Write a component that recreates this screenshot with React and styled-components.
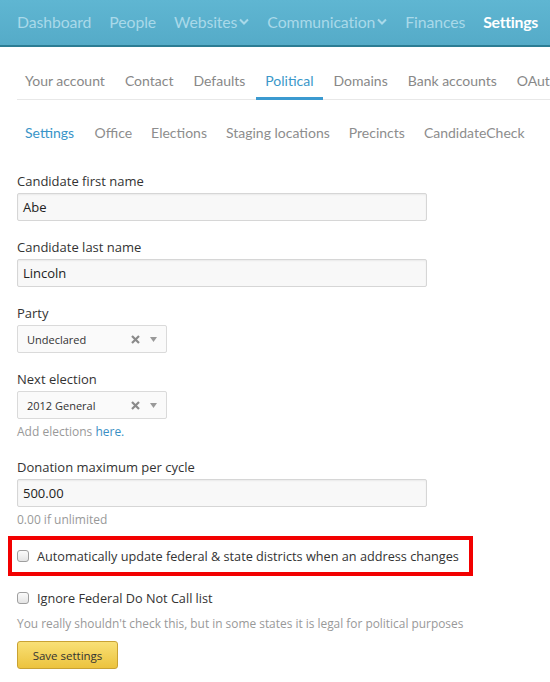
import React from "react";
import styled, { createGlobalStyle } from "styled-components";

const Global = createGlobalStyle`
  html, body {
    margin: 0;
    padding: 0;
    background: #fff;
    overflow: hidden;
  }
  body {
    font-family: "Open Sans", "DejaVu Sans", sans-serif;
    color: #333;
  }
`;

const TopBar = styled.div`
  box-sizing: border-box;
  height: 47px;
  background: linear-gradient(#5fb6d2, #55abc8);
  border-bottom: 2px solid #2c7d94;
  display: flex;
  align-items: center;
  padding: 0 0 3px 17px;
  gap: 18px;
  font-family: Lato, "Open Sans", sans-serif;
  font-size: 15.8px;
  white-space: nowrap;
`;

const NavItem = styled.a`
  color: ${(p) => (p.$active ? "#fff" : "#a9d9e9")};
  font-weight: ${(p) => (p.$active ? 700 : 400)};
  text-decoration: none;
  display: flex;
  align-items: center;
  gap: 2px;
  letter-spacing: ${(p) => (p.$active ? "-0.3px" : "-0.1px")};
`;

const Content = styled.div`
  padding: 0 0 0 17px;
`;

const Tabs = styled.ul`
  list-style: none;
  margin: 18px 0 0 0;
  padding: 0;
  display: flex;
  gap: 2px;
  border-bottom: 1px solid #e8e8e8;
  white-space: nowrap;
  width: 700px;
  font-family: Lato, "Open Sans", sans-serif;
  font-size: 14px;
`;

const Tab = styled.li`
  padding: 0 9px;
  height: 32px;
  line-height: 32px;
  margin-bottom: -1px;
  border-bottom: 3px solid ${(p) => (p.$active ? "#3b9ad0" : "transparent")};
  color: ${(p) => (p.$active ? "#3a97c9" : "#888")};
  &:first-child {
    margin-left: -1px;
  }
`;

const SubTabs = styled.ul`
  list-style: none;
  margin: 22px 0 0 0;
  padding: 0 0 0 8px;
  display: flex;
  gap: 19px;
  font-family: Lato, "Open Sans", sans-serif;
  font-size: 14px;
  line-height: 22px;
  white-space: nowrap;
`;

const SubTab = styled.li`
  color: ${(p) => (p.$active ? "#3a95c8" : "#8d8d8d")};
  &:first-child {
    margin-right: 1.5px;
  }
`;

const Form = styled.form`
  margin-top: 28px;
  display: flex;
  flex-direction: column;
`;

const Field = styled.div`
  display: flex;
  flex-direction: column;
  margin-bottom: ${(p) => (p.$last ? "0" : "17px")};
`;

const Label = styled.label`
  font-size: 13px;
  line-height: 18px;
  color: #333;
  margin-bottom: 3px;
`;

const TextInput = styled.div`
  box-sizing: border-box;
  width: 410px;
  height: 28px;
  border: 1px solid #d6d6d6;
  border-radius: 2px;
  background: #f8f8f8;
  box-shadow: inset 0 1px 2px rgba(0, 0, 0, 0.06);
  padding: 0 5px;
  font-size: 13px;
  line-height: 26px;
  color: #222;
`;

const Select = styled.div`
  box-sizing: border-box;
  width: 150px;
  height: 28px;
  border: 1px solid #dadada;
  border-radius: 2px;
  background: #fafafa;
  display: flex;
  align-items: center;
  padding: 0 9px;
  font-size: 11px;
  color: #333;
`;

const SelectValue = styled.span`
  flex: 1;
`;

const SelectIcons = styled.span`
  display: flex;
  align-items: center;
  gap: 10px;
`;

const Help = styled.div`
  font-size: 12px;
  line-height: 18px;
  color: #999;
  margin-top: 4px;
  a {
    color: #3a8fc4;
    text-decoration: none;
  }
`;

const Highlight = styled.div`
  box-sizing: border-box;
  width: 465px;
  margin: 7px 0 13px -9px;
  border: 4px solid #f20000;
  padding: 7px 5px;
`;

const CheckRow = styled.label`
  display: flex;
  align-items: center;
  gap: 8px;
  font-size: 12.7px;
  line-height: 18px;
  color: #333;
  white-space: nowrap;
`;

const Box = styled.span`
  box-sizing: border-box;
  width: 12px;
  height: 12px;
  border: 1px solid #9f9f9f;
  border-radius: 3px;
  background: linear-gradient(#fbfbfb, #e4e4e4);
  flex-shrink: 0;
`;

const Note = styled.div`
  font-size: 11.9px;
  line-height: 18px;
  color: #999;
  margin-top: 7px;
`;

const SaveButton = styled.button`
  margin-top: 9px;
  align-self: flex-start;
  width: 101px;
  height: 28px;
  border: 1px solid #c9a233;
  border-radius: 3px;
  background: linear-gradient(#f9e076, #ecc33e);
  font-family: "Open Sans", sans-serif;
  font-size: 11.5px;
  color: #333;
  padding: 0;
`;

const Chevron = () => (
  <svg width="10" height="7" viewBox="0 0 10 7" fill="none">
    <path d="M1 1.5 L5 5.5 L9 1.5" stroke="#a9d9e9" strokeWidth="2" />
  </svg>
);

const Clear = () => (
  <svg width="9" height="9" viewBox="0 0 9 9">
    <path d="M1 1 L8 8 M8 1 L1 8" stroke="#8a8a8a" strokeWidth="2.2" />
  </svg>
);

const Caret = () => (
  <svg width="7" height="5" viewBox="0 0 7 5">
    <path d="M0 0 H7 L3.5 5 Z" fill="#999" />
  </svg>
);

const nav = [
  { label: "Dashboard" },
  { label: "People" },
  { label: "Websites", menu: true },
  { label: "Communication", menu: true },
  { label: "Finances" },
  { label: "Settings", active: true },
];

const tabs = ["Your account", "Contact", "Defaults", "Political", "Domains", "Bank accounts", "OAuth"];
const subTabs = ["Settings", "Office", "Elections", "Staging locations", "Precincts", "CandidateCheck"];

const SelectBox = ({ value }) => (
  <Select>
    <SelectValue>{value}</SelectValue>
    <SelectIcons>
      <Clear />
      <Caret />
    </SelectIcons>
  </Select>
);

export default function App() {
  return (
    <>
      <Global />
      <TopBar>
        {nav.map((n) => (
          <NavItem key={n.label} $active={n.active}>
            {n.label}
            {n.menu && <Chevron />}
          </NavItem>
        ))}
      </TopBar>
      <Content>
        <Tabs>
          {tabs.map((t) => (
            <Tab key={t} $active={t === "Political"}>
              {t}
            </Tab>
          ))}
        </Tabs>
        <SubTabs>
          {subTabs.map((t) => (
            <SubTab key={t} $active={t === "Settings"}>
              {t}
            </SubTab>
          ))}
        </SubTabs>
        <Form onSubmit={(e) => e.preventDefault()}>
          <Field>
            <Label>Candidate first name</Label>
            <TextInput>Abe</TextInput>
          </Field>
          <Field>
            <Label>Candidate last name</Label>
            <TextInput>Lincoln</TextInput>
          </Field>
          <Field>
            <Label>Party</Label>
            <SelectBox value="Undeclared" />
          </Field>
          <Field>
            <Label>Next election</Label>
            <SelectBox value="2012 General" />
            <Help>
              Add elections <a href="#">here.</a>
            </Help>
          </Field>
          <Field $last>
            <Label>Donation maximum per cycle</Label>
            <TextInput>500.00</TextInput>
            <Help>0.00 if unlimited</Help>
          </Field>
          <Highlight>
            <CheckRow>
              <Box />
              Automatically update federal &amp; state districts when an address changes
            </CheckRow>
          </Highlight>
          <CheckRow>
            <Box />
            Ignore Federal Do Not Call list
          </CheckRow>
          <Note>You really shouldn't check this, but in some states it is legal for political purposes</Note>
          <SaveButton type="submit">Save settings</SaveButton>
        </Form>
      </Content>
    </>
  );
}
